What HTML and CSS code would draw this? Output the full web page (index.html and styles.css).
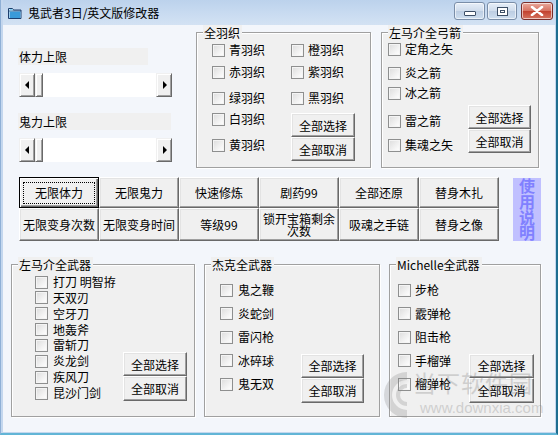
FILE: index.html
```html
<!DOCTYPE html>
<html lang="zh-CN">
<head>
<meta charset="utf-8">
<title>鬼武者3日/英文版修改器</title>
<link rel="stylesheet" href="styles.css">
</head>
<body>
<div class="window">
  <div class="titlebar">
    <svg class="app-icon" width="14" height="12" viewBox="0 0 14 12">
      <path d="M0.5 1.5h4l1 1.5h7.5v8.5h-12.5z" fill="#fff" stroke="#1d3f6e"/>
      <path d="M1 4h12" stroke="#1d3f6e"/>
      <rect x="1.5" y="4.5" width="11" height="6.5" fill="#3a9ad9"/>
      <rect x="1.5" y="2" width="3" height="1.5" fill="#7fd0f5"/>
    </svg>
    <span class="title">鬼武者3日/英文版修改器</span>
    <div class="controls">
      <span class="ctl ctl-min"><span class="min-bar"></span></span>
      <span class="ctl ctl-max"><span class="max-box"></span></span>
      <span class="ctl ctl-close">
        <svg width="14" height="10" viewBox="0 0 14 10"><path d="M2 1l10 8M12 1l-10 8" stroke="#fff" stroke-width="2.6" stroke-linecap="round"/></svg>
      </span>
    </div>
  </div>

  <div class="client">
    <div class="top-row">
      <div class="limits">
        <div class="lbl lbl-short">体力上限</div>
        <div class="scroll"><span class="arrow arrow-left"></span><span class="thumb"></span><span class="track"></span><span class="arrow arrow-right"></span></div>
        <div class="lbl lbl-long">鬼力上限</div>
        <div class="scroll"><span class="arrow arrow-left"></span><span class="thumb"></span><span class="track"></span><span class="arrow arrow-right"></span></div>
      </div>

      <div class="group g-yu">
        <div class="legend">全羽织</div>
        <div class="grid grid-yu">
          <label class="item r1 c1"><span class="cb"></span>青羽织</label>
          <label class="item r2 c1"><span class="cb"></span>赤羽织</label>
          <label class="item r3 c1"><span class="cb"></span>绿羽织</label>
          <label class="item r4 c1"><span class="cb"></span>白羽织</label>
          <label class="item r5 c1"><span class="cb"></span>黄羽织</label>
          <label class="item r1 c2"><span class="cb"></span>橙羽织</label>
          <label class="item r2 c2"><span class="cb"></span>紫羽织</label>
          <label class="item r3 c2"><span class="cb"></span>黑羽织</label>
          <div class="btn-stack yu-btns"><button class="btn sbtn">全部选择</button><button class="btn sbtn">全部取消</button></div>
        </div>
      </div>

      <div class="group g-bow">
        <div class="legend">左马介全弓箭</div>
        <div class="grid grid-bow">
          <label class="item r1 c1"><span class="cb"></span>定角之矢</label>
          <label class="item r2 c1"><span class="cb"></span>炎之箭</label>
          <label class="item r3 c1"><span class="cb"></span>冰之箭</label>
          <label class="item r4 c1"><span class="cb"></span>雷之箭</label>
          <label class="item r5 c1"><span class="cb"></span>集魂之矢</label>
          <div class="btn-stack bow-btns"><button class="btn sbtn">全部选择</button><button class="btn sbtn">全部取消</button></div>
        </div>
      </div>
    </div>

    <div class="mid-row">
      <div class="btn-grid">
        <button class="btn mbtn default"><span class="focus">无限体力</span></button>
        <button class="btn mbtn">无限鬼力</button>
        <button class="btn mbtn">快速修炼</button>
        <button class="btn mbtn">剧药99</button>
        <button class="btn mbtn">全部还原</button>
        <button class="btn mbtn">替身木扎</button>
        <button class="btn mbtn">无限变身次数</button>
        <button class="btn mbtn">无限变身时间</button>
        <button class="btn mbtn">等级99</button>
        <button class="btn mbtn two-line">锁开宝箱剩余次数</button>
        <button class="btn mbtn">吸魂之手链</button>
        <button class="btn mbtn">替身之像</button>
      </div>
      <div class="manual">使<br>用<br>说<br>明</div>
    </div>

    <div class="bottom-row">
      <div class="group g-sam">
        <div class="legend">左马介全武器</div>
        <div class="grid grid-sam">
          <label class="item"><span class="cb"></span>打刀 明智拵</label>
          <label class="item"><span class="cb"></span>天双刃</label>
          <label class="item"><span class="cb"></span>空牙刀</label>
          <label class="item"><span class="cb"></span>地轰斧</label>
          <label class="item"><span class="cb"></span>雷斩刀</label>
          <label class="item"><span class="cb"></span>炎龙剑</label>
          <label class="item"><span class="cb"></span>疾风刀</label>
          <label class="item"><span class="cb"></span>昆沙门剑</label>
          <div class="btn-stack sam-btns"><button class="btn sbtn">全部选择</button><button class="btn sbtn">全部取消</button></div>
        </div>
      </div>

      <div class="group g-jack">
        <div class="legend">杰克全武器</div>
        <div class="grid grid-five">
          <label class="item"><span class="cb"></span>鬼之鞭</label>
          <label class="item"><span class="cb"></span>炎蛇剑</label>
          <label class="item"><span class="cb"></span>雷闪枪</label>
          <label class="item"><span class="cb"></span>冰碎球</label>
          <label class="item"><span class="cb"></span>鬼无双</label>
          <div class="btn-stack five-btns"><button class="btn sbtn">全部选择</button><button class="btn sbtn">全部取消</button></div>
        </div>
      </div>

      <div class="group g-mich">
        <div class="legend">Michelle全武器</div>
        <div class="grid grid-five grid-mich">
          <label class="item"><span class="cb"></span>步枪</label>
          <label class="item"><span class="cb"></span>霰弹枪</label>
          <label class="item"><span class="cb"></span>阻击枪</label>
          <label class="item"><span class="cb"></span>手榴弹</label>
          <label class="item"><span class="cb"></span>榴弹枪</label>
          <div class="btn-stack five-btns mich-btns"><button class="btn sbtn">全部选择</button><button class="btn sbtn">全部取消</button></div>
        </div>
      </div>
    </div>
  </div>

  <div class="watermark">
    <svg class="wm-logo" width="40" height="50" viewBox="0 0 40 50">
      <path d="M28 6 A19 19 0 1 0 28 44" fill="none" stroke="#8a8a8a" stroke-width="8"/>
      <path d="M28 16 A9 9 0 0 0 28 34" fill="none" stroke="#8a8a8a" stroke-width="4"/>
    </svg>
    <div class="wm-text">
      <div class="wm-cn">当下软件园</div>
      <div class="wm-url">www.downxia.com</div>
    </div>
  </div>
</div>
</body>
</html>
```

FILE: styles.css
```css
* { box-sizing: border-box; }

html, body {
  margin: 0;
  padding: 0;
  background: #ffffff;
}

body {
  font-family: "Noto Sans CJK SC", "Liberation Sans", sans-serif;
  font-size: 12px;
  color: #000;
}

.window {
  position: relative;
  width: 558px;
  height: 435px;
  background: #c4d7ee;
  border-left: 1px solid #8fb0d6;
  border-right: 2px solid #1e6e90;
  border-bottom: 2px solid #62b5d6;
  padding: 0 1px 1px 2px;
  display: flex;
  flex-direction: column;
  overflow: hidden;
}

/* ---------- title bar ---------- */
.titlebar {
  height: 25px;
  flex: none;
  display: flex;
  align-items: center;
  padding-left: 5px;
  background: linear-gradient(#bcd2ec, #cadcf1 60%, #d3e2f3);
}

.app-icon { flex: none; margin-top: 1px; }

.title {
  margin-left: 6px;
  font-size: 12px;
  line-height: 14px;
  color: #000;
}

.controls {
  margin-left: auto;
  margin-right: 2px;
  align-self: flex-start;
  margin-top: 2px;
  display: flex;
  gap: 2px;
}

.ctl {
  height: 18px;
  border: 1px solid #7a8ea8;
  border-radius: 3px;
  display: flex;
  align-items: center;
  justify-content: center;
  background: linear-gradient(#e6eef8, #cfdcec 50%, #bccde2 51%, #cfdff0);
  box-shadow: inset 0 0 0 1px rgba(255,255,255,0.6);
}

.ctl-min { width: 31px; }
.ctl-max { width: 30px; }
.ctl-close {
  width: 32px;
  margin-left: 2px;
  border-color: #7a2e2a;
  background: linear-gradient(#e9a99c, #d6705f 50%, #c2412e 51%, #d5735f);
}

.min-bar {
  width: 12px;
  height: 5px;
  margin-top: 5px;
  background: #fff;
  border: 1px solid #3d4f66;
  border-radius: 1px;
}

.max-box {
  width: 11px;
  height: 9px;
  border: 1px solid #3d4f66;
  background: #fff;
  box-shadow: inset 0 0 0 2px #fff, inset 0 0 0 3px #3d4f66;
}

/* ---------- client ---------- */
.client {
  flex: 1;
  background: #f3f6fb;
  padding-top: 7px;
  position: relative;
}

.top-row {
  display: flex;
  align-items: flex-start;
  height: 136px;
}

.limits {
  width: 154px;
  margin-left: 15px;
  padding-top: 16px;
  display: flex;
  flex-direction: column;
}

.lbl {
  height: 17px;
  line-height: 17px;
  background: #f0f0f0;
  padding-left: 1px;
}
.lbl-short { width: 130px; }
.lbl-long { width: 153px; margin-top: 16px; }

.scroll {
  margin-top: 8px;
  margin-left: 1px;
  width: 153px;
  height: 24px;
  display: flex;
  background: #fff;
}

.arrow, .thumb {
  flex: none;
  background: #f0f0f0;
  border: 1px solid;
  border-color: #f0f0f0 #696969 #696969 #f0f0f0;
  box-shadow: inset 1px 1px #fff, inset -1px -1px #a0a0a0;
  position: relative;
}
.arrow { width: 16px; }
.thumb { width: 8px; }
.track { flex: 1; background: #fff; }

.arrow::after {
  content: "";
  position: absolute;
  top: 7px;
  width: 0;
  height: 0;
  border-top: 4px solid transparent;
  border-bottom: 4px solid transparent;
}
.arrow-left::after { left: 5px; border-right: 4px solid #000; }
.arrow-right::after { left: 6px; border-left: 4px solid #000; }

/* ---------- group boxes ---------- */
.group {
  background: #f0f0f0;
  border: 1px solid #a0a0a0;
  box-shadow: inset 1px 1px #fff, 1px 1px #fff;
  flex: none;
}

.legend {
  width: fit-content;
  margin: -8px 0 0 6px;
  padding: 0 2px 0 1px;
  height: 15px;
  line-height: 15px;
  background: #f0f0f0;
}

.g-yu { width: 175px; height: 136px; margin-left: 24px; }
.g-bow { width: 158px; height: 136px; margin-left: 10px; }

.grid {
  display: grid;
  margin-top: -7px;
}

.item {
  display: flex;
  align-items: center;
  height: 16px;
  line-height: 16px;
  gap: 4px;
  white-space: nowrap;
  align-self: start;
}

.cb {
  flex: none;
  width: 13px;
  height: 13px;
  border: 1px solid #8e8f8f;
  background: linear-gradient(135deg, #dcdcdc, #f6f6f6 70%, #fff);
  box-shadow: inset 0 0 0 1px #f4f4f4;
}

.r1 { grid-row: 1; } .r2 { grid-row: 2; } .r3 { grid-row: 3; } .r4 { grid-row: 4; } .r5 { grid-row: 5; }
.c1 { grid-column: 1; } .c2 { grid-column: 2; }

.grid-yu {
  padding: 9px 0 0 15px;
  grid-template-columns: 79px 64px;
  grid-template-rows: 22px 26px 21px 26px 24px;
}
.yu-btns { grid-column: 2; grid-row: 4 / span 2; align-self: end; }

.grid-bow {
  padding: 8px 0 0 6px;
  grid-template-columns: 80px 63px;
  grid-template-rows: 24px 20px 28px 24px 16px;
}
.bow-btns { grid-column: 2; grid-row: 4 / span 2; align-self: end; }

.btn-stack {
  display: flex;
  flex-direction: column;
}

/* ---------- buttons ---------- */
.btn {
  appearance: none;
  margin: 0;
  padding: 0;
  font-family: "Noto Sans CJK SC", "Liberation Sans", sans-serif;
  font-size: 12px;
  line-height: 13px;
  color: #000;
  background: #f0f0f0;
  border: 1px solid;
  border-color: #fff #696969 #696969 #fff;
  box-shadow: inset -1px -1px #a0a0a0, inset 1px 1px #e3e3e3;
  display: flex;
  align-items: center;
  justify-content: center;
  text-align: center;
}

.sbtn { height: 24px; width: 100%; }

/* ---------- middle row ---------- */
.mid-row {
  display: flex;
  align-items: flex-start;
  margin-top: 9px;
  margin-left: 16px;
}

.btn-grid {
  display: grid;
  grid-template-columns: repeat(6, 80px);
  grid-template-rows: 31px 33px;
}

.mbtn { width: 80px; height: 100%; }

.default {
  border: 1px solid #000;
  box-shadow: inset 1px 1px #fff, inset -1px -1px #696969, inset -2px -2px #a0a0a0;
}
.focus {
  display: flex;
  align-items: center;
  justify-content: center;
  width: 72px;
  height: 22px;
  border: 1px dotted #000;
}

.two-line { padding: 0 2px; line-height: 12px; }

.manual {
  width: 28px;
  height: 63px;
  margin-left: 14px;
  margin-top: 1px;
  background: #c0c0ff;
  color: #8080ff;
  font-size: 16px;
  font-weight: bold;
  line-height: 15.75px;
  text-align: center;
}

/* ---------- bottom row ---------- */
.bottom-row {
  display: flex;
  align-items: flex-start;
  margin-top: 23px;
  margin-left: 8px;
  gap: 9px;
}

.g-sam { width: 184px; height: 153px; }
.g-jack { width: 176px; height: 153px; }
.g-mich { width: 152px; height: 153px; }

.grid-sam {
  padding: 9px 0 0 23px;
  grid-template-columns: 88px 64px;
  grid-auto-rows: 15.86px;
}
.grid-sam .item { grid-column: 1; gap: 5px; }
.sam-btns { grid-column: 2; grid-row: 6 / span 3; align-self: start; margin-top: -1px; }
.sam-btns .sbtn + .sbtn { height: 25px; }

.grid-five {
  padding: 17px 0 0 15px;
  grid-template-columns: 81px 63px;
  grid-auto-rows: 23.5px;
}
.grid-five .item { grid-column: 1; gap: 5px; }
.five-btns { grid-column: 2; grid-row: 4 / span 2; align-self: start; margin-top: 1px; }
.five-btns .sbtn + .sbtn { height: 25px; }

.grid-mich {
  padding-left: 8px;
  grid-template-columns: 71px 65px;
}
.grid-mich .item { gap: 4px; }

/* ---------- watermark overlay ---------- */
.watermark {
  position: absolute;
  left: 378px;
  top: 368px;
  display: flex;
  align-items: flex-start;
  opacity: 0.28;
  pointer-events: none;
  white-space: nowrap;
}
.wm-logo { flex: none; margin-top: 2px; margin-right: -6px; }
.wm-text { display: flex; flex-direction: column; }
.wm-cn {
  font-size: 23px;
  line-height: 28px;
  color: #7a7a7a;
  letter-spacing: 1px;
}
.wm-url {
  font-family: "Liberation Sans", sans-serif;
  font-size: 15px;
  line-height: 16px;
  color: #7a7a7a;
  margin-left: 7px;
  margin-top: 4px;
}
```
